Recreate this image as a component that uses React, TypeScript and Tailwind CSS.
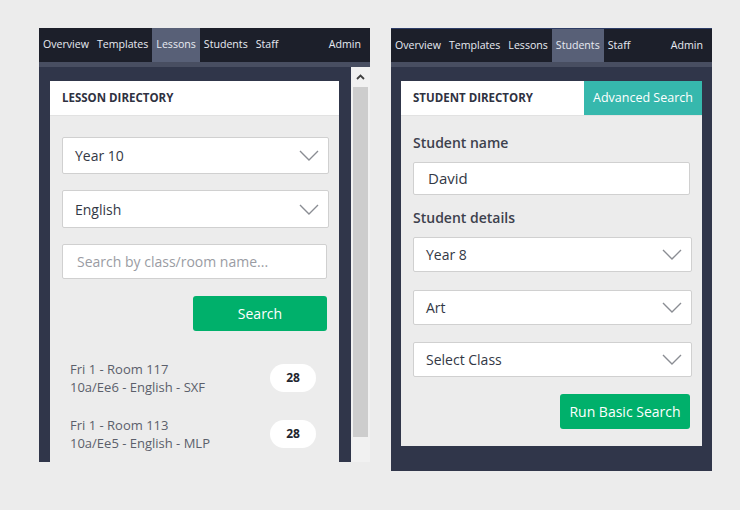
import React from "react";

const font = { fontFamily: '"Open Sans", "Noto Sans", Arial, sans-serif' };

function Chevron() {
  return (
    <svg width="20" height="11" viewBox="0 0 20 11" className="shrink-0">
      <path d="M1 1 L10 10 L19 1" fill="none" stroke="#8a8d93" strokeWidth="1.4" />
    </svg>
  );
}

function Select({ label, className }: { label: string; className: string }) {
  return (
    <div
      className={`flex items-center justify-between bg-white border border-[#d0d0d0] rounded-[2px] pl-3 pr-[9px] text-[14px] text-[#333845] ${className}`}
    >
      <span>{label}</span>
      <Chevron />
    </div>
  );
}

function NavBar({ items, active, bordered }: { items: string[]; active: string; bordered?: boolean }) {
  return (
    <>
      <div
        className={`flex h-[34px] bg-[#1c1f2a] text-[10.6px] text-[#e8ebf2] ${bordered ? "border-t border-[#2d3c66]" : ""}`}
      >
        {items.map((it) => (
          <div
            key={it}
            className={`flex items-center px-1 ${it === active ? "bg-[#586077]" : ""}`}
          >
            {it}
          </div>
        ))}
        <div className="ml-auto flex items-center pr-[9px]">Admin</div>
      </div>
      <div className="h-[5px] bg-[#484e61]" />
    </>
  );
}

const navItems = ["Overview", "Templates", "Lessons", "Students", "Staff"];

function LessonPanel() {
  const lessons = [
    { a: "Fri 1 - Room 117", b: "10a/Ee6 - English - SXF", n: 28 },
    { a: "Fri 1 - Room 113", b: "10a/Ee5 - English - MLP", n: 28 },
  ];
  return (
    <div className="w-[331px] h-[434px] flex flex-col">
      <NavBar items={navItems} active="Lessons" />
      <div className="flex flex-1 overflow-hidden">
        <div className="w-[312px] bg-[#30364a] pt-[14px] pl-[11px] pr-[12px] overflow-hidden">
          <div className="bg-white h-[35px] flex items-center px-3 text-[11.5px] font-bold text-[#2f3241] border-b border-[#e2e2e2]">
            LESSON DIRECTORY
          </div>
          <div className="bg-[#ececec] pl-3 pr-[10px] pt-[21px] pb-6 flex flex-col">
            <Select label="Year 10" className="h-[37px]" />
            <Select label="English" className="h-[38px] mt-4" />
            <div className="mt-4 mr-[2px] h-[35px] bg-white border border-[#d0d0d0] rounded-[2px] flex items-center pl-[14px] text-[14px] text-[#9a9ca3]">
              Search by class/room name...
            </div>
            <div className="flex justify-end mt-[17px] mr-[2px]">
              <div className="w-[134px] h-[35px] rounded-[3px] bg-[#00b06b] text-white text-[14px] flex items-center justify-center">
                Search
              </div>
            </div>
            <div className="flex flex-col gap-[20px] mt-[29px] pl-2 pr-[13px]">
              {lessons.map((l) => (
                <div key={l.a} className="flex items-center justify-between">
                  <div className="text-[13px] leading-[18px] text-[#5b5f6b]">
                    <div>{l.a}</div>
                    <div>{l.b}</div>
                  </div>
                  <div className="w-[46px] h-[28px] rounded-full bg-white flex items-center justify-center text-[12px] font-bold text-[#22252e]">
                    {l.n}
                  </div>
                </div>
              ))}
            </div>
          </div>
        </div>
        <div className="w-[19px] bg-[#f1f1f1] flex flex-col items-center">
          <div className="h-[20px] flex items-center justify-center">
            <svg width="9" height="6" viewBox="0 0 9 6">
              <path d="M1 5 L4.5 1.5 L8 5" fill="none" stroke="#404040" strokeWidth="1.8" />
            </svg>
          </div>
          <div className="w-[15px] h-[350px] bg-[#cdcdcd]" />
        </div>
      </div>
    </div>
  );
}

function StudentPanel() {
  return (
    <div className="w-[321px] h-[443px] flex flex-col bg-[#30364a]">
      <NavBar items={navItems} active="Students" bordered />
      <div className="px-[10px] pt-[14px]">
        <div className="bg-white h-[35px] flex items-stretch border-b border-[#e2e2e2]">
          <div className="flex-1 flex items-center px-3 text-[11.5px] font-bold text-[#2f3241]">
            STUDENT DIRECTORY
          </div>
          <div className="w-[118px] bg-[#36b8ad] text-white text-[12.5px] flex items-center justify-center">
            Advanced Search
          </div>
        </div>
        <div className="bg-[#ececec] pl-3 pr-[10px] pt-[17px] pb-[17px] flex flex-col">
          <div className="text-[14px] font-semibold text-[#3d414d] leading-[19px]">Student name</div>
          <div className="mt-[10px] mr-[2px] h-[33px] bg-white border border-[#d0d0d0] rounded-[2px] flex items-center pl-[14px] text-[15px] text-[#333845]">
            David
          </div>
          <div className="mt-[13px] text-[14px] font-semibold text-[#3d414d] leading-[19px]">Student details</div>
          <Select label="Year 8" className="h-[35px] mt-[10px]" />
          <Select label="Art" className="h-[35px] mt-[18px]" />
          <Select label="Select Class" className="h-[35px] mt-[17px]" />
          <div className="flex justify-end mt-[17px] mr-[2px]">
            <div className="w-[130px] h-[35px] rounded-[3px] bg-[#00b06b] text-white text-[14px] flex items-center justify-center">
              Run Basic Search
            </div>
          </div>
        </div>
      </div>
    </div>
  );
}

export default function App() {
  return (
    <div style={font} className="w-[740px] h-[510px] bg-[#ececec] flex items-start gap-[21px] pl-[39px] pt-[28px]">
      <LessonPanel />
      <StudentPanel />
    </div>
  );
}
